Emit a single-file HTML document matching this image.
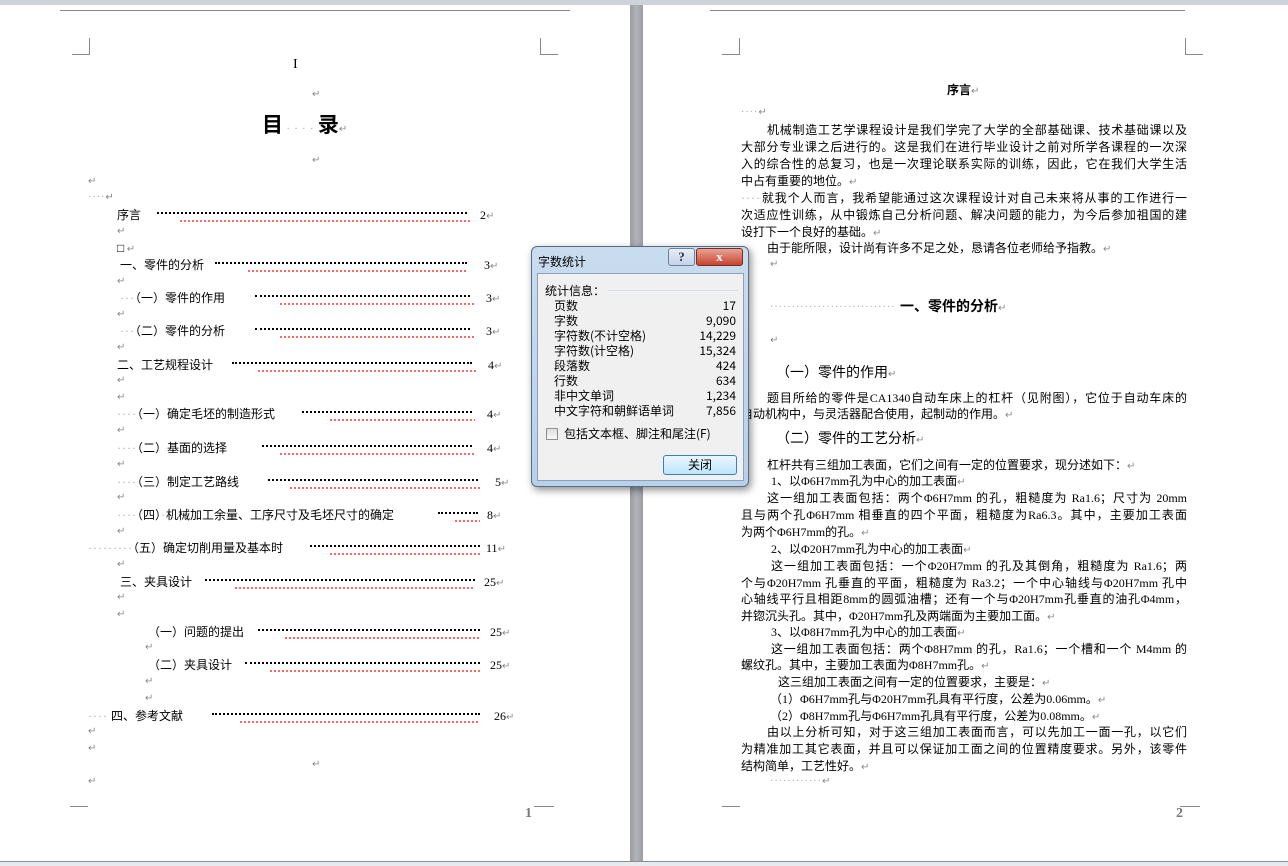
<!DOCTYPE html>
<html><head><meta charset="utf-8">
<style>
*{margin:0;padding:0;box-sizing:border-box}
body{width:1288px;height:866px;overflow:hidden;background:#fff;position:relative;font-family:"Liberation Serif","Noto Sans CJK SC",sans-serif;font-size:12px;color:#000}
.l{position:absolute;white-space:nowrap;line-height:14px;height:14px}
.j{width:446px;text-align:justify;text-align-last:justify}
.r{color:#888;font-size:10px}
.d{color:#aab;letter-spacing:1px}
.lead{position:absolute;height:3px;border-bottom:2px dotted #000}
.wv{position:absolute;height:2px;background:repeating-linear-gradient(90deg,#f66 0 2px,transparent 2px 4px)}
.num{position:absolute;line-height:14px}
.cm{position:absolute;border-color:#888;border-style:solid;border-width:0}
</style></head><body>
<div style="position:absolute;left:0;top:0;width:1288px;height:5px;background:#cfd2d8"></div>
<div style="position:absolute;left:630px;top:5px;width:13px;height:856px;background:linear-gradient(90deg,#9a9da2,#b0b3b7,#9a9da2)"></div>
<div style="position:absolute;left:0;top:861px;width:1288px;height:5px;background:#e8eaed;border-top:1px solid #8a9099"></div>
<div style="position:absolute;left:60px;top:10px;width:510px;border-top:1px solid #888"></div>
<div style="position:absolute;left:710px;top:10px;width:475px;border-top:1px solid #888"></div>
<div class="cm" style="left:72px;top:38px;width:18px;height:17px;border-right-width:1px;border-bottom-width:1px"></div>
<div class="cm" style="left:540px;top:38px;width:18px;height:17px;border-left-width:1px;border-bottom-width:1px"></div>
<div class="cm" style="left:70px;top:806px;width:18px;height:10px;border-top-width:1px"></div>
<div class="cm" style="left:534px;top:806px;width:20px;height:10px;border-top-width:1px"></div>
<div class="cm" style="left:722px;top:38px;width:18px;height:17px;border-right-width:1px;border-bottom-width:1px"></div>
<div class="cm" style="left:1185px;top:38px;width:18px;height:17px;border-left-width:1px;border-bottom-width:1px"></div>
<div class="cm" style="left:722px;top:806px;width:18px;height:10px;border-top-width:1px"></div>
<div class="cm" style="left:1180px;top:806px;width:20px;height:10px;border-top-width:1px"></div>
<div class="num" style="left:525px;top:807px;font-size:14px;font-weight:bold;color:#777">1</div>
<div class="num" style="left:1176px;top:807px;font-size:14px;font-weight:bold;color:#777">2</div>

<div class="l" style="left:293px;top:58px;font-size:14px">I</div>
<div class="l r" style="left:312px;top:88px">↵</div>
<div class="l" style="left:262px;top:112px;font-size:21px;font-weight:bold;height:26px;line-height:26px">目<span class="d" style="font-size:10px;font-weight:normal"> · · · · </span>录<span class="r" style="font-weight:normal">↵</span></div>
<div class="l r" style="left:312px;top:154px">↵</div>
<div class="l r" style="left:88px;top:175px">↵</div>
<div class="l r" style="left:88px;top:191px"><span class="d">····</span>↵</div>

<div class="l" style="left:117px;top:208px">序言</div><div class="lead" style="left:157px;top:211px;width:310px"></div><div class="wv" style="left:180px;top:220px;width:290px"></div><div class="l" style="left:480px;top:208px">2<span class="r">↵</span></div>
<div class="l r" style="left:117px;top:225px">↵</div>
<div class="l" style="left:117px;top:241px">□<span class="r"> ↵</span></div>
<div class="l" style="left:120px;top:258px">一、零件的分析</div><div class="lead" style="left:215px;top:261px;width:252px"></div><div class="wv" style="left:248px;top:270px;width:220px"></div><div class="l" style="left:484px;top:258px">3<span class="r">↵</span></div>
<div class="l r" style="left:117px;top:275px">↵</div>
<div class="l" style="left:120px;top:291px"><span class="d">···</span>（一）零件的作用</div><div class="lead" style="left:255px;top:294px;width:215px"></div><div class="wv" style="left:280px;top:303px;width:195px"></div><div class="l" style="left:486px;top:291px">3<span class="r">↵</span></div>
<div class="l r" style="left:117px;top:308px">↵</div>
<div class="l" style="left:120px;top:324px"><span class="d">···</span>（二）零件的分析</div><div class="lead" style="left:255px;top:327px;width:215px"></div><div class="wv" style="left:280px;top:336px;width:195px"></div><div class="l" style="left:486px;top:324px">3<span class="r">↵</span></div>
<div class="l r" style="left:117px;top:341px">↵</div>
<div class="l" style="left:117px;top:358px">二、工艺规程设计</div><div class="lead" style="left:232px;top:361px;width:240px"></div><div class="wv" style="left:258px;top:370px;width:218px"></div><div class="l" style="left:488px;top:358px">4<span class="r">↵</span></div>
<div class="l r" style="left:117px;top:374px">↵</div>
<div class="l r" style="left:117px;top:391px">↵</div>
<div class="l" style="left:117px;top:407px"><span class="d">····</span>（一）确定毛坯的制造形式</div><div class="lead" style="left:302px;top:410px;width:170px"></div><div class="wv" style="left:330px;top:419px;width:145px"></div><div class="l" style="left:487px;top:407px">4<span class="r">↵</span></div>
<div class="l r" style="left:117px;top:424px">↵</div>
<div class="l" style="left:117px;top:441px"><span class="d">····</span>（二）基面的选择</div><div class="lead" style="left:262px;top:444px;width:210px"></div><div class="wv" style="left:280px;top:453px;width:195px"></div><div class="l" style="left:487px;top:441px">4<span class="r">↵</span></div>
<div class="l r" style="left:117px;top:458px">↵</div>
<div class="l" style="left:117px;top:475px"><span class="d">····</span>（三）制定工艺路线</div><div class="lead" style="left:268px;top:478px;width:210px"></div><div class="wv" style="left:290px;top:487px;width:190px"></div><div class="l" style="left:495px;top:475px">5<span class="r">↵</span></div>
<div class="l r" style="left:117px;top:491px">↵</div>
<div class="l" style="left:117px;top:508px"><span class="d">····</span>（四）<span class="d">·</span>机械加工余量、工序尺寸及毛坯尺寸的确定</div><div class="lead" style="left:438px;top:511px;width:40px"></div><div class="wv" style="left:455px;top:520px;width:25px"></div><div class="l" style="left:487px;top:508px">8<span class="r">↵</span></div>
<div class="l r" style="left:117px;top:525px">↵</div>
<div class="l" style="left:88px;top:541px"><span class="d">·········</span>（五）确定切削用量及基本时</div><div class="lead" style="left:310px;top:544px;width:170px"></div><div class="wv" style="left:330px;top:553px;width:150px"></div><div class="l" style="left:486px;top:541px">11<span class="r">↵</span></div>
<div class="l r" style="left:117px;top:558px">↵</div>
<div class="l" style="left:120px;top:575px">三、夹具设计</div><div class="lead" style="left:205px;top:578px;width:270px"></div><div class="wv" style="left:235px;top:587px;width:240px"></div><div class="l" style="left:484px;top:575px">25<span class="r">↵</span></div>
<div class="l r" style="left:117px;top:591px">↵</div>
<div class="l r" style="left:117px;top:608px">↵</div>
<div class="l" style="left:148px;top:625px">（一）问题的提出</div><div class="lead" style="left:258px;top:628px;width:222px"></div><div class="wv" style="left:285px;top:637px;width:195px"></div><div class="l" style="left:490px;top:625px">25<span class="r">↵</span></div>
<div class="l r" style="left:145px;top:641px">↵</div>
<div class="l" style="left:148px;top:658px">（二）夹具设计</div><div class="lead" style="left:245px;top:661px;width:235px"></div><div class="wv" style="left:270px;top:670px;width:210px"></div><div class="l" style="left:490px;top:658px">25<span class="r">↵</span></div>
<div class="l r" style="left:145px;top:675px">↵</div>
<div class="l r" style="left:145px;top:692px">↵</div>
<div class="l" style="left:88px;top:709px"><span class="d">····</span> 四、参考文献</div><div class="lead" style="left:212px;top:712px;width:268px"></div><div class="wv" style="left:240px;top:721px;width:240px"></div><div class="l" style="left:494px;top:709px">26<span class="r">↵</span></div>
<div class="l r" style="left:88px;top:725px">↵</div>
<div class="l r" style="left:88px;top:742px">↵</div>
<div class="l r" style="left:312px;top:758px">↵</div>
<div class="l r" style="left:88px;top:775px">↵</div>

<div class="l" style="left:947px;top:83px;font-weight:bold">序言<span class="r" style="font-weight:normal">↵</span></div>
<div class="l r" style="left:741px;top:106px"><span class="d">····</span>↵</div>
<div class="l j" style="left:741px;top:123px;padding-left:26px">机械制造工艺学课程设计是我们学完了大学的全部基础课、技术基础课以及</div>
<div class="l j" style="left:741px;top:140px">大部分专业课之后进行的。这是我们在进行毕业设计之前对所学各课程的一次深</div>
<div class="l j" style="left:741px;top:157px">入的综合性的总复习，也是一次理论联系实际的训练，因此，它在我们大学生活</div>
<div class="l" style="left:741px;top:174px">中占有重要的地位。<span class="r">↵</span></div>
<div class="l j" style="left:741px;top:191px"><span class="d">····</span>就我个人而言，我希望能通过这次课程设计对自己未来将从事的工作进行一</div>
<div class="l j" style="left:741px;top:208px">次适应性训练，从中锻炼自己分析问题、解决问题的能力，为今后参加祖国的建</div>
<div class="l" style="left:741px;top:225px">设打下一个良好的基础。<span class="r">↵</span></div>
<div class="l" style="left:767px;top:241px">由于能所限，设计尚有许多不足之处，恳请各位老师给予指教。<span class="r">↵</span></div>
<div class="l r" style="left:770px;top:258px">↵</div>
<div class="l" style="left:770px;top:299px;font-size:10px;height:18px;line-height:18px;color:#aab;letter-spacing:1px">·····························</div>
<div class="l" style="left:900px;top:299px;font-size:14px;font-weight:bold;height:18px;line-height:18px">一、零件的分析<span class="r" style="font-weight:normal">↵</span></div>
<div class="l r" style="left:770px;top:334px">↵</div>
<div class="l" style="left:776px;top:365px;font-size:14px;height:18px;line-height:18px">（一）零件的作用<span class="r">↵</span></div>
<div class="l j" style="left:741px;top:391px;padding-left:26px">题目所给的零件是CA1340自动车床上的杠杆（见附图），它位于自动车床的</div>
<div class="l" style="left:741px;top:407px">自动机构中，与灵活器配合使用，起制动的作用。<span class="r">↵</span></div>
<div class="l" style="left:776px;top:431px;font-size:14px;height:18px;line-height:18px">（二）零件的工艺分析<span class="r">↵</span></div>
<div class="l" style="left:767px;top:458px">杠杆共有三组加工表面，它们之间有一定的位置要求，现分述如下：<span class="r">↵</span></div>
<div class="l" style="left:771px;top:474px">1、以Φ6H7mm孔为中心的加工表面<span class="r">↵</span></div>
<div class="l j" style="left:741px;top:491px;padding-left:26px">这一组加工表面包括：两个Φ6H7mm 的孔，粗糙度为 Ra1.6；尺寸为 20mm</div>
<div class="l j" style="left:741px;top:508px">且与两个孔Φ6H7mm 相垂直的四个平面，粗糙度为Ra6.3。其中，主要加工表面</div>
<div class="l" style="left:741px;top:525px">为两个Φ6H7mm的孔。<span class="r">↵</span></div>
<div class="l" style="left:771px;top:542px">2、以Φ20H7mm孔为中心的加工表面<span class="r">↵</span></div>
<div class="l j" style="left:741px;top:559px;padding-left:30px">这一组加工表面包括：一个Φ20H7mm 的孔及其倒角，粗糙度为 Ra1.6；两</div>
<div class="l j" style="left:741px;top:576px">个与Φ20H7mm 孔垂直的平面，粗糙度为 Ra3.2；一个中心轴线与Φ20H7mm 孔中</div>
<div class="l j" style="left:741px;top:592px">心轴线平行且相距8mm的圆弧油槽；还有一个与Φ20H7mm孔垂直的油孔Φ4mm，</div>
<div class="l" style="left:741px;top:609px">并锪沉头孔。其中，Φ20H7mm孔及两端面为主要加工面。<span class="r">↵</span></div>
<div class="l" style="left:771px;top:625px">3、以Φ8H7mm孔为中心的加工表面<span class="r">↵</span></div>
<div class="l j" style="left:741px;top:642px;padding-left:30px">这一组加工表面包括：两个Φ8H7mm 的孔，Ra1.6；一个槽和一个 M4mm 的</div>
<div class="l" style="left:741px;top:658px">螺纹孔。其中，主要加工表面为Φ8H7mm孔。<span class="r">↵</span></div>
<div class="l" style="left:778px;top:675px">这三组加工表面之间有一定的位置要求，主要是：<span class="r">↵</span></div>
<div class="l" style="left:770px;top:692px">（1）Φ6H7mm孔与Φ20H7mm孔具有平行度，公差为0.06mm。<span class="r">↵</span></div>
<div class="l" style="left:770px;top:709px">（2）Φ8H7mm孔与Φ6H7mm孔具有平行度，公差为0.08mm。<span class="r">↵</span></div>
<div class="l j" style="left:741px;top:725px;padding-left:26px">由以上分析可知，对于这三组加工表面而言，可以先加工一面一孔，以它们</div>
<div class="l j" style="left:741px;top:742px">为精准加工其它表面，并且可以保证加工面之间的位置精度要求。另外，该零件</div>
<div class="l" style="left:741px;top:759px">结构简单，工艺性好。<span class="r">↵</span></div>
<div class="l r" style="left:770px;top:775px"><span class="d">············</span>↵</div>

<div style="position:absolute;left:531px;top:246px;width:218px;height:241px;border-radius:6px;border:1px solid #5b6b80;background:linear-gradient(#c9dcef,#b8d0ea);box-shadow:2px 3px 8px rgba(0,0,0,.45)">
 <div style="position:absolute;left:6px;top:6px;font-family:'Noto Sans CJK SC',sans-serif;font-size:12px;color:#000">字数统计</div>
 <div style="position:absolute;left:136px;top:1px;width:27px;height:18px;border:1px solid #6d7f99;border-radius:3px;background:linear-gradient(#e6eef8,#c3d3e6);text-align:center;font-size:13px;font-weight:bold;line-height:16px;color:#333">?</div>
 <div style="position:absolute;left:164px;top:1px;width:47px;height:18px;border:1px solid #7a2c22;border-radius:3px;background:linear-gradient(#e9a394,#c7442e);text-align:center;font-size:13px;font-weight:bold;line-height:16px;color:#fff">x</div>
 <div style="position:absolute;left:5px;top:26px;width:207px;height:208px;background:#f0f0f0;border:1px solid #8aa0bb;font-family:'Noto Sans CJK SC',sans-serif;font-size:12px;line-height:15px">
  <div style="position:absolute;left:7px;top:9px">统计信息：</div>
  <div style="position:absolute;left:70px;top:16px;width:130px;border-top:1px solid #d5dfe5"></div>
  <div style="position:absolute;left:16px;top:24px;width:182px">
   <div style="display:flex;justify-content:space-between"><span>页数</span><span>17</span></div>
   <div style="display:flex;justify-content:space-between"><span>字数</span><span>9,090</span></div>
   <div style="display:flex;justify-content:space-between"><span>字符数(不计空格)</span><span>14,229</span></div>
   <div style="display:flex;justify-content:space-between"><span>字符数(计空格)</span><span>15,324</span></div>
   <div style="display:flex;justify-content:space-between"><span>段落数</span><span>424</span></div>
   <div style="display:flex;justify-content:space-between"><span>行数</span><span>634</span></div>
   <div style="display:flex;justify-content:space-between"><span>非中文单词</span><span>1,234</span></div>
   <div style="display:flex;justify-content:space-between"><span>中文字符和朝鲜语单词</span><span>7,856</span></div>
  </div>
  <div style="position:absolute;left:8px;top:154px;width:12px;height:12px;border:1px solid #8e8f8f;background:linear-gradient(#ddd,#fafafa)"></div>
  <div style="position:absolute;left:26px;top:152px">包括文本框、脚注和尾注(F)</div>
  <div style="position:absolute;left:125px;top:181px;width:74px;height:20px;border:1px solid #3c7fb1;border-radius:3px;background:linear-gradient(#eaf6fd,#bee6fd);text-align:center;line-height:18px">关闭</div>
 </div>
</div>
</body></html>
